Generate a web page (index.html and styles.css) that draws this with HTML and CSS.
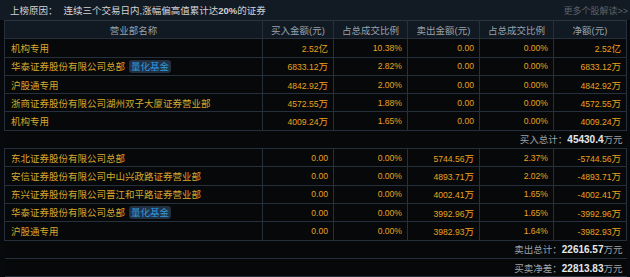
FILE: index.html
```html
<!DOCTYPE html>
<html lang="zh">
<head>
<meta charset="utf-8">
<link rel="stylesheet" href="styles.css">
</head>
<body>
<div class="panel">
  <div class="titlebar">
    <span class="reason">上榜原因：<span class="reason-text">连续三个交易日内,涨幅偏高值累计达<b>20%</b>的证券</span></span>
    <span class="more">更多个股解读&gt;&gt;</span>
  </div>
  <table class="lhb">
    <colgroup>
      <col class="c-name"><col class="c-num"><col class="c-pct"><col class="c-num2"><col class="c-pct"><col class="c-net">
    </colgroup>
    <thead>
      <tr><th>营业部名称</th><th>买入金额(元)</th><th>占总成交比例</th><th>卖出金额(元)</th><th>占总成交比例</th><th>净额(元)</th></tr>
    </thead>
    <tbody>
      <tr><td class="name">机构专用</td><td class="num">2.52<span class="u">亿</span></td><td class="num">10.38%</td><td class="num">0.00</td><td class="num">0.00%</td><td class="num">2.52<span class="u">亿</span></td></tr>
      <tr><td class="name">华泰证券股份有限公司总部<span class="badge">量化基金</span></td><td class="num">6833.12<span class="u">万</span></td><td class="num">2.82%</td><td class="num">0.00</td><td class="num">0.00%</td><td class="num">6833.12<span class="u">万</span></td></tr>
      <tr><td class="name">沪股通专用</td><td class="num">4842.92<span class="u">万</span></td><td class="num">2.00%</td><td class="num">0.00</td><td class="num">0.00%</td><td class="num">4842.92<span class="u">万</span></td></tr>
      <tr><td class="name">浙商证券股份有限公司湖州双子大厦证券营业部</td><td class="num">4572.55<span class="u">万</span></td><td class="num">1.88%</td><td class="num">0.00</td><td class="num">0.00%</td><td class="num">4572.55<span class="u">万</span></td></tr>
      <tr><td class="name">机构专用</td><td class="num">4009.24<span class="u">万</span></td><td class="num">1.65%</td><td class="num">0.00</td><td class="num">0.00%</td><td class="num">4009.24<span class="u">万</span></td></tr>
      <tr class="total"><td colspan="6">买入总计：<b>45430.4</b>万元</td></tr>
      <tr><td class="name">东北证券股份有限公司总部</td><td class="num">0.00</td><td class="num">0.00%</td><td class="num">5744.56<span class="u">万</span></td><td class="num">2.37%</td><td class="num">-5744.56<span class="u">万</span></td></tr>
      <tr><td class="name">安信证券股份有限公司中山兴政路证券营业部</td><td class="num">0.00</td><td class="num">0.00%</td><td class="num">4893.71<span class="u">万</span></td><td class="num">2.02%</td><td class="num">-4893.71<span class="u">万</span></td></tr>
      <tr><td class="name">东兴证券股份有限公司晋江和平路证券营业部</td><td class="num">0.00</td><td class="num">0.00%</td><td class="num">4002.41<span class="u">万</span></td><td class="num">1.65%</td><td class="num">-4002.41<span class="u">万</span></td></tr>
      <tr><td class="name">华泰证券股份有限公司总部<span class="badge">量化基金</span></td><td class="num">0.00</td><td class="num">0.00%</td><td class="num">3992.96<span class="u">万</span></td><td class="num">1.65%</td><td class="num">-3992.96<span class="u">万</span></td></tr>
      <tr><td class="name">沪股通专用</td><td class="num">0.00</td><td class="num">0.00%</td><td class="num">3982.93<span class="u">万</span></td><td class="num">1.64%</td><td class="num">-3982.93<span class="u">万</span></td></tr>
      <tr class="total"><td colspan="6">卖出总计：<b>22616.57</b>万元</td></tr>
      <tr class="total"><td colspan="6">买卖净差：<b>22813.83</b>万元</td></tr>
    </tbody>
  </table>
</div>
</body>
</html>
```

FILE: styles.css
```css
html, body {
  margin: 0;
  padding: 0;
  background: #07090c;
  width: 630px;
  height: 277px;
  overflow: hidden;
}

.panel {
  font-family: "Liberation Sans", "Noto Sans CJK SC", sans-serif;
  font-size: 9.5px;
  color: #c8ccd0;
}

.titlebar {
  height: 20px;
  background: #121a24;
  display: flex;
  align-items: center;
  justify-content: space-between;
  padding: 0 2px 0 10px;
}

.reason {
  color: #d2d4d6;
  white-space: nowrap;
}

.reason-text {
  margin-left: 6px;
}

.reason-text b {
  font-weight: bold;
}

.more {
  color: #5c636b;
  font-size: 9px;
  white-space: nowrap;
  flex-shrink: 0;
}

.lhb {
  margin-left: 4px;
  width: 622px;
  border-collapse: collapse;
  table-layout: fixed;
}

.c-name { width: 258px; }
.c-num { width: 71px; }
.c-pct { width: 74px; }
.c-num2 { width: 72px; }
.c-net { width: 73px; }

.lhb th, .lhb td {
  border: 1px solid #26303d;
  height: 17.3px;
  padding: 0;
  white-space: nowrap;
  overflow: hidden;
  vertical-align: middle;
}

.lhb th {
  background: #111922;
  color: #9aa2ab;
  font-weight: normal;
  text-align: center;
  border-top-color: #2a3544;
}

.lhb td {
  background: #06080a;
}

.name {
  color: #d7a92e;
  padding-left: 6px !important;
  text-align: left;
}

.num {
  color: #eba11e;
  text-align: right;
  padding-right: 5px !important;
  font-size: 8.6px;
}

.num .u {
  font-size: 9.5px;
}

.badge {
  display: inline-block;
  margin-left: 4px;
  padding: 0 2px;
  height: 13px;
  line-height: 13px;
  border-radius: 3px;
  background: #223041;
  color: #2e9be0;
  font-size: 9.5px;
  vertical-align: middle;
  position: relative;
  top: -1px;
}

.total td {
  text-align: right;
  color: #9ea3a8;
  padding-right: 4px;
  border-left: none;
  border-right: none;
}

.total b {
  color: #e6e8ea;
  font-size: 10px;
}
```
